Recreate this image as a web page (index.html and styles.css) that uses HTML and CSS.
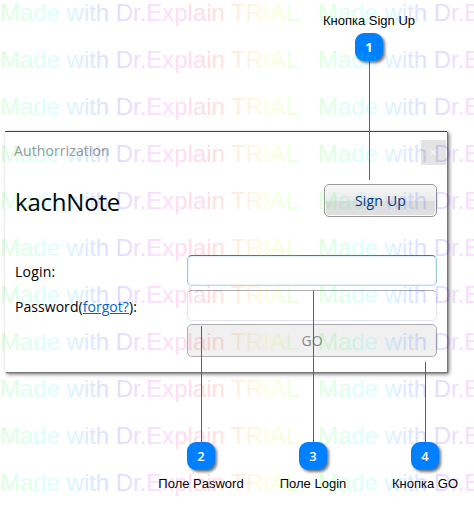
FILE: index.html
```
<!DOCTYPE html>
<html lang="ru">
<head>
<meta charset="utf-8">
<title>Authorrization</title>
<link rel="stylesheet" href="styles.css">
</head>
<body>
<main class="canvas">
  <section class="dialog">
    <header class="titlebar">
      <span class="title">Authorrization</span>
      <span class="close"><svg width="7" height="7" viewBox="0 0 7 7"><path d="M.7.7 6.3 6.3M6.3.7.7 6.3"/></svg></span>
    </header>
    <div class="brand-row">
      <h1 class="brand">kachNote</h1>
      <button class="btn signup">Sign Up</button>
    </div>
    <form class="form">
      <label class="label login-label">Login:</label>
      <div class="field login"></div>
      <label class="label password-label">Password(<a class="link">forgot?</a>):</label>
      <div class="field password"></div>
      <button class="btn go" type="button">GO</button>
    </form>
  </section>

  <i class="line l1"></i><i class="line l2"></i><i class="line l3"></i><i class="line l4"></i>
  <b class="badge b1">1</b><b class="badge b2">2</b><b class="badge b3">3</b><b class="badge b4">4</b>
  <span class="note n1">Кнопка Sign Up</span>
  <span class="note n2">Поле Pasword</span>
  <span class="note n3">Поле Login</span>
  <span class="note n4">Кнопка GO</span>

  <svg class="watermark" width="474" height="507">
    <defs>
      <linearGradient id="hue" gradientUnits="userSpaceOnUse" x1="0" y1="0" x2="318" y2="0">
        <stop offset="0" stop-color="#0f0"/><stop offset=".167" stop-color="#0ff"/>
        <stop offset=".35" stop-color="#00f"/><stop offset=".5" stop-color="#f0f"/>
        <stop offset=".667" stop-color="#f00"/><stop offset=".84" stop-color="#ff0"/>
        <stop offset="1" stop-color="#0f0"/>
      </linearGradient>
      <g id="mark"><text x="0" y="21" textLength="299" fill="url(#hue)">Made with Dr.Explain TRIAL</text></g>
      <g id="row"><use href="#mark"/><use href="#mark" x="318"/></g>
    </defs>
    <use href="#row"/><use href="#row" y="47"/><use href="#row" y="94"/><use href="#row" y="141"/>
    <use href="#row" y="188"/><use href="#row" y="235"/><use href="#row" y="282"/><use href="#row" y="329"/>
    <use href="#row" y="376"/><use href="#row" y="423"/><use href="#row" y="470"/>
  </svg>
</main>
</body>
</html>
```
FILE: styles.css
```
* { box-sizing: border-box; }
body { margin: 0; background: #fff; }
.canvas { position: relative; width: 474px; height: 507px; overflow: hidden; padding: 131px 0 0 5px; }
.dialog {
  width: 442px; height: 241px; background: #fff;
  border-top: 1px solid #444;
  box-shadow: 1px 1px 1px #777, 2px 2px 4px rgba(0,0,0,.6);
  font-family: "Open Sans", "Noto Sans", sans-serif; font-size: 14px; color: #000;
}
.titlebar { display: flex; justify-content: space-between; height: 52px; padding: 8px 1px 0 9px; }
.title { color: #999; line-height: 22px; letter-spacing: .1px; }
.close { width: 25px; height: 25px; background: #e4e4e4; display: flex; align-items: center; justify-content: center; }
.close path { stroke: #f4f4f4; stroke-width: 1.3; fill: none; }
.brand-row { display: flex; justify-content: space-between; height: 71px; padding: 0 10px; }
.brand { margin: 0; font-size: 24px; font-weight: 400; line-height: 36px; letter-spacing: -.2px; }
.btn { font: inherit; padding: 0; height: 33px; border-radius: 5px; line-height: 31px; }
.signup {
  width: 113px; border: 1px solid #999; color: #0a2f7c; letter-spacing: .2px;
  background: linear-gradient(#f7f7f7, #ebebeb 50%, #dcdcdc 51%, #e0e0e0);
  box-shadow: inset 0 0 0 1px #fafafa;
}
.form { display: grid; grid-template-columns: 172px 250px; grid-template-rows: 31px 31px 33px; row-gap: 4px; padding: 0 10px; }
.label { line-height: 33px; white-space: nowrap; letter-spacing: .05px; }
.login-label { letter-spacing: .2px; }
.link { color: #06c; text-decoration: underline; }
.field { border-radius: 5px; border: 1px solid; background: #fff; }
.login { border-color: #3f78a8 #9cc9e0 #b0dcec; box-shadow: inset 0 0 0 1px rgba(190,225,240,.4); }
.password { border-color: #aaadb8 #e2e5f0 #e2e5f0; }
.go { grid-column: 2; border: 1px solid #adadad; background: #f0f0f0; color: #888; margin-top: -1px; }

.line { position: absolute; width: 1px; background: #0078e8; }
.l1 { left: 369px; top: 60px; height: 120px; }
.l2 { left: 201px; top: 326px; height: 120px; }
.l3 { left: 313px; top: 291px; height: 155px; }
.l4 { left: 425px; top: 362px; height: 84px; }
.badge {
  position: absolute; width: 28px; height: 28px; border-radius: 9px;
  background: #0080ff; color: #fff; box-shadow: 2px 2px 3px rgba(0,0,0,.55);
  font: 600 13px/28px "Open Sans", sans-serif; text-align: center;
}
.b1 { left: 355px; top: 33px; font-weight: 700; }
.b2 { left: 187px; top: 442px; }
.b3 { left: 299px; top: 442px; }
.b4 { left: 411px; top: 442px; }
.note { position: absolute; font: 13px/16px "Liberation Sans", Arial, sans-serif; white-space: nowrap; transform: translateX(-50%); }
.n1 { left: 369px; top: 13px; }
.n2 { left: 201px; top: 476px; }
.n3 { left: 313px; top: 476px; }
.n4 { left: 425px; top: 476px; }
.watermark { position: absolute; left: 0; top: 0; opacity: .13; pointer-events: none; font: 24px "Liberation Sans", Arial, sans-serif; }
```
